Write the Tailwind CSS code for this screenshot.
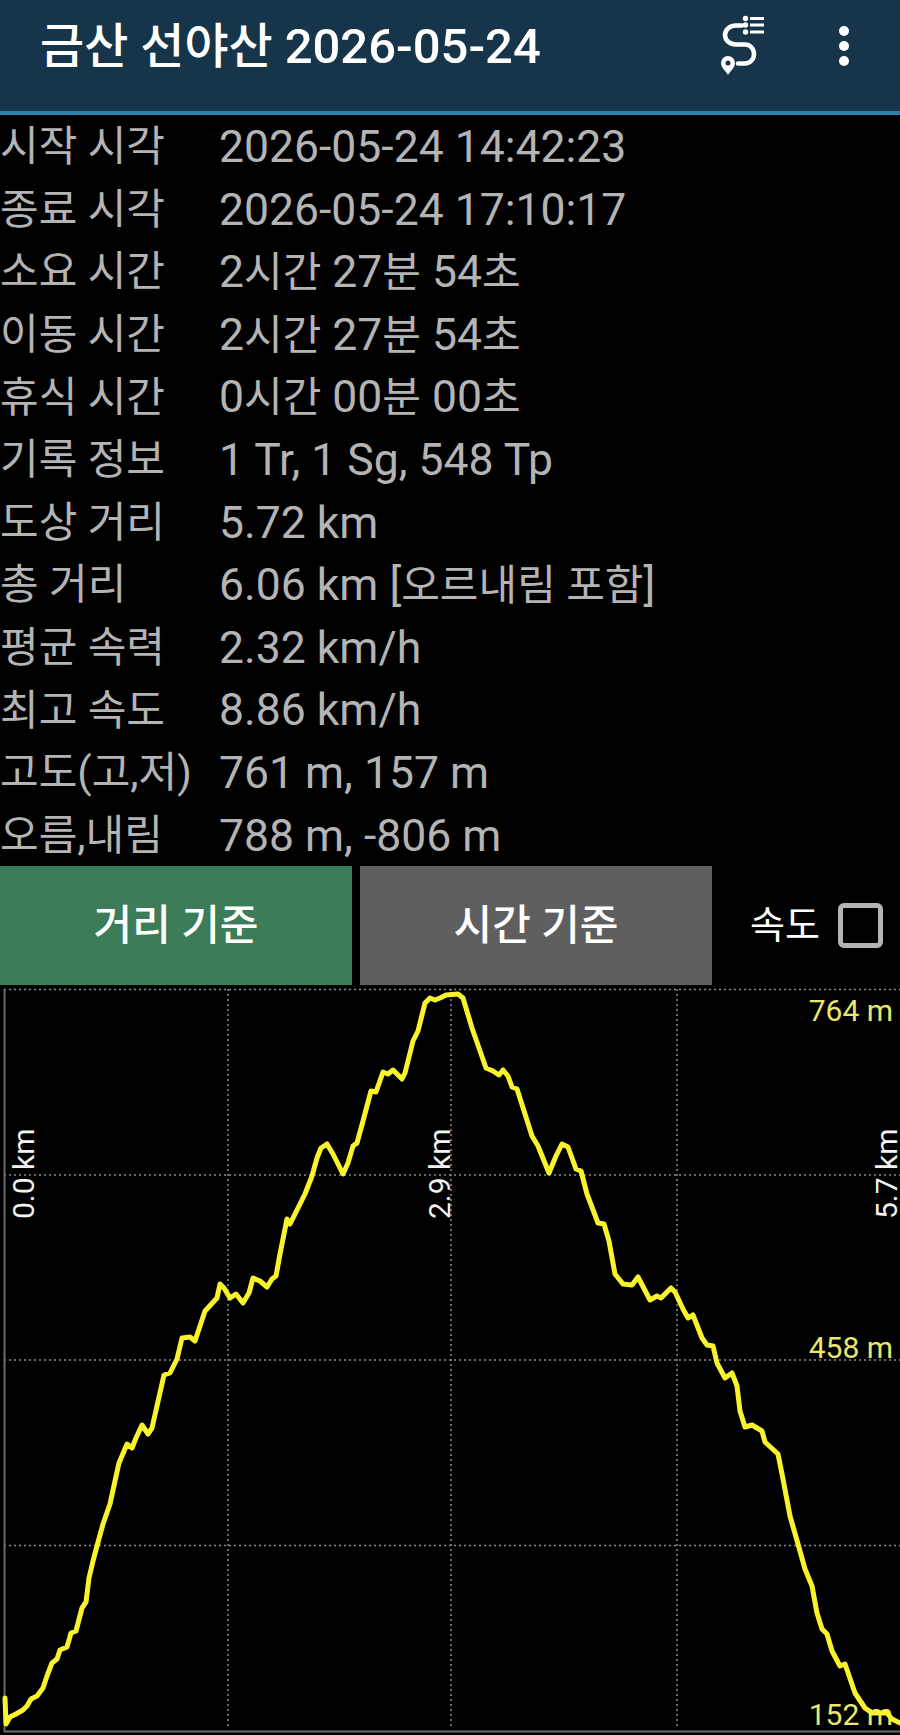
<!DOCTYPE html>
<html lang="ko">
<head>
<meta charset="UTF-8">
<title>금산 선야산 2026-05-24</title>
<script src="https://cdn.jsdelivr.net/npm/@tailwindcss/browser@4"></script>
</head>
<body class="bg-black w-[900px] h-[1735px] overflow-hidden font-['Roboto','Noto_Sans_CJK_KR',sans-serif]">
  <!-- Header -->
  <header class="h-[115px] bg-[#17354a] border-b-4 border-[#2f7fa6] flex items-center pl-[40px] pb-[19px]">
    <h1 class="flex-1 text-[48px] leading-none font-medium text-white whitespace-nowrap">금산 선야산 <span class="text-[49px]">2026-05-24</span></h1>
    <svg class="w-[60px] h-[80px] mr-[68px] -mt-[2px]" viewBox="710 5 60 80" fill="none">
      <path d="M741 25.500h-6c-6 0-11 4-11 9.500s5 9.500 11 9.500h9c5 0 9 4 9 9.500s-4 9.500-9 9.500h-7" stroke="#fff" stroke-width="4.500" stroke-linecap="round"/>
      <path fill-rule="evenodd" d="M727 75c-2-4-7-7-7-12a7 7 0 0 1 14 0c0 5-5 8-7 12zm0-14.500a2.500 2.500 0 1 0 0 5 2.500 2.500 0 0 0 0-5z" fill="#fff"/>
      <circle cx="744.500" cy="18.500" r="2.700" fill="#fff"/>
      <circle cx="744.500" cy="25" r="2.700" fill="#fff"/>
      <circle cx="744.500" cy="32" r="2.700" fill="#fff"/>
      <path d="M749 18.500h14M749 25h14M749 32h14" stroke="#fff" stroke-width="3"/>
    </svg>
    <div class="flex flex-col gap-[5px] mr-[51px]">
      <span class="block size-[10px] rounded-full bg-white"></span>
      <span class="block size-[10px] rounded-full bg-white"></span>
      <span class="block size-[10px] rounded-full bg-white"></span>
    </div>
  </header>

  <!-- Track info -->
  <div class="text-[#b4b4b4] text-[44.5px] leading-none whitespace-nowrap pt-[1px] h-[751px]">
    <div class="h-[62.6px] flex items-center"><span class="w-[219px] text-[42px]">시작 시각</span><span>2026-05-24 14:42:23</span></div>
    <div class="h-[62.6px] flex items-center"><span class="w-[219px] text-[42px]">종료 시각</span><span>2026-05-24 17:10:17</span></div>
    <div class="h-[62.6px] flex items-center"><span class="w-[219px] text-[42px]">소요 시간</span><span>2<span class="text-[42px]">시간</span> 27<span class="text-[42px]">분</span> 54<span class="text-[42px]">초</span></span></div>
    <div class="h-[62.6px] flex items-center"><span class="w-[219px] text-[42px]">이동 시간</span><span>2<span class="text-[42px]">시간</span> 27<span class="text-[42px]">분</span> 54<span class="text-[42px]">초</span></span></div>
    <div class="h-[62.6px] flex items-center"><span class="w-[219px] text-[42px]">휴식 시간</span><span>0<span class="text-[42px]">시간</span> 00<span class="text-[42px]">분</span> 00<span class="text-[42px]">초</span></span></div>
    <div class="h-[62.6px] flex items-center"><span class="w-[219px] text-[42px]">기록 정보</span><span>1 Tr, 1 Sg, 548 Tp</span></div>
    <div class="h-[62.6px] flex items-center"><span class="w-[219px] text-[42px]">도상 거리</span><span>5.72 km</span></div>
    <div class="h-[62.6px] flex items-center"><span class="w-[219px] text-[42px]">총 거리</span><span>6.06 km [<span class="text-[42px]">오르내림 포함</span>]</span></div>
    <div class="h-[62.6px] flex items-center"><span class="w-[219px] text-[42px]">평균 속력</span><span>2.32 km/h</span></div>
    <div class="h-[62.6px] flex items-center"><span class="w-[219px] text-[42px]">최고 속도</span><span>8.86 km/h</span></div>
    <div class="h-[62.6px] flex items-center"><span class="w-[219px] text-[42px]">고도(고,저)</span><span>761 m, 157 m</span></div>
    <div class="h-[62.6px] flex items-center"><span class="w-[219px] text-[42px]">오름,내림</span><span>788 m, -806 m</span></div>
  </div>

  <!-- Chart mode buttons -->
  <div class="h-[119px] flex items-stretch">
    <button class="w-[352px] bg-[#3c7c59] text-white text-[42px] font-medium">거리 기준</button>
    <button class="w-[352px] ml-[8px] bg-[#5f5f5f] text-white text-[42px] font-medium">시간 기준</button>
    <label class="flex items-center ml-[38px]">
      <span class="text-white text-[38px]">속도</span>
      <span class="block size-[45px] ml-[18px] border-[5px] border-[#b4b4b4] rounded-[6px]"></span>
    </label>
  </div>

  <!-- Elevation chart -->
  <svg class="block w-[900px] h-[751px]" viewBox="0 984 900 751">
    <g stroke="#8c8c8c" stroke-width="1.500" stroke-dasharray="2 3">
      <path d="M4 988.500H900M4 1174H900M4 1359H900M4 1544.500H900"/>
      <path d="M228 988V1726M451 988V1726M677 988V1726"/>
    </g>
    <path d="M4.500 988V1730.500H900" fill="none" stroke="#6a6a6a" stroke-width="2"/>
    <g class="font-['Roboto',sans-serif] text-[30px]" fill="#f2f2f2">
      <text transform="translate(34 1218) rotate(-90)">0.0 km</text>
      <text transform="translate(450 1218) rotate(-90)">2.9 km</text>
      <text transform="translate(897 1218) rotate(-90)">5.7 km</text>
    </g>
    <g class="font-['Roboto',sans-serif] text-[30px]" fill="#e8e86a" text-anchor="end">
      <text x="893" y="1020">764 m</text>
      <text x="893" y="1357">458 m</text>
      <text x="893" y="1724">152 m</text>
    </g>
    <polyline fill="none" stroke="#f8f32b" stroke-width="5" stroke-linejoin="round" stroke-linecap="round" points="5,1697 6,1723 10,1716 16,1713 23,1709 27,1705 31,1698 37,1695 43,1687 47,1675 52,1662 57,1658 60,1649 67,1646 71,1632 76,1630 82,1607 86,1601 89,1577 93,1560 97,1545 103,1523 110,1503 115,1480 119,1462 127,1443 132,1447 136,1437 142,1424 148,1433 152,1427 164,1374 170,1372 177,1358 182,1337 190,1336 195,1340 199,1328 205,1310 217,1297 220,1283 224,1287 230,1297 236,1293 243,1302 249,1292 253,1277 260,1280 267,1286 272,1278 276,1275 280,1253 287,1218 290,1223 295,1213 305,1193 312,1175 317,1157 321,1147 327,1143 333,1153 343,1173 348,1162 353,1145 357,1142 363,1120 371,1090 376,1091 383,1071 388,1073 393,1069 402,1078 405,1072 413,1040 418,1030 425,1002 430,997 435,999 440,997 446,994 458,993 463,997 472,1027 486,1067 493,1070 499,1074 503,1069 508,1075 512,1086 517,1088 525,1113 532,1135 538,1145 549,1172 556,1155 562,1143 568,1146 576,1168 581,1170 587,1193 598,1222 604,1223 609,1240 615,1273 623,1283 632,1284 638,1276 650,1299 657,1295 661,1297 671,1287 675,1291 683,1308 688,1317 693,1314 702,1337 707,1344 713,1345 717,1362 725,1377 732,1372 737,1385 740,1410 745,1426 752,1424 762,1430 765,1441 778,1453 783,1478 790,1515 798,1543 805,1568 812,1585 817,1612 822,1628 827,1633 832,1650 840,1665 845,1663 855,1692 865,1707 872,1712 878,1712 887,1712 892,1718 900,1722"/>
  </svg>
</body>
</html>
